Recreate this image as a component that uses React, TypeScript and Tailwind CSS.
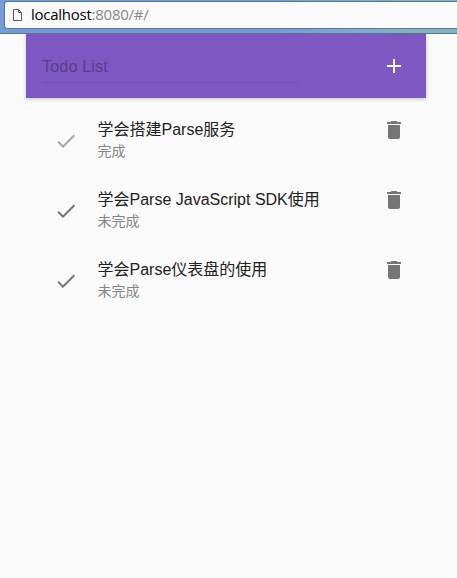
import React from 'react';

type Todo = { title: string; done: boolean };

const todos: Todo[] = [
  { title: '学会搭建Parse服务', done: true },
  { title: '学会Parse JavaScript SDK使用', done: false },
  { title: '学会Parse仪表盘的使用', done: false },
];

function Icon({ d, className }: { d: string; className: string }) {
  return (
    <svg viewBox="0 0 24 24" className={`block h-6 w-6 shrink-0 fill-current ${className}`}>
      <path d={d} />
    </svg>
  );
}

const CHECK = 'M9 16.17L4.83 12l-1.42 1.41L9 19 21 7l-1.41-1.41z';
const TRASH = 'M6 19c0 1.1.9 2 2 2h8c1.1 0 2-.9 2-2V7H6v12zM19 4h-3.5l-1-1h-5l-1 1H5v2h14V4z';
const PLUS = 'M19 13h-6v6h-2v-6H5v-2h6V5h2v6h6v2z';

function AddressBar() {
  return (
    <div className="relative z-10 h-[34px] border-b border-[#54758f] bg-linear-to-r from-[#759cd9] from-60% to-[#86b2bd] to-90% pt-px pl-1">
      <div className="flex h-[28px] items-center rounded-l-[3px] border border-r-0 border-[#56779f] bg-[#fafafa] pl-[8px]">
        <svg viewBox="0 0 9 12" className="h-3 w-[9px] fill-none stroke-[#5a5a5a]">
          <path d="M1 .5h4.5l3 3v8h-8V.5zM5.500 .5v3h3" />
        </svg>
        <span className="mb-0.5 ml-[9px] whitespace-pre font-['Open_Sans','Noto_Sans',sans-serif] text-[15px] leading-5 tracking-[-0.25px] text-[#888]">
          <span className="text-black">localhost</span>:8080/#/
        </span>
      </div>
    </div>
  );
}

function TodoRow({ title, done }: Todo) {
  return (
    <li className="flex h-[70px] pr-5 pl-7">
      <Icon d={CHECK} className={`mt-[23px] ${done ? 'text-[#a5a5a5]' : 'text-[#757575]'}`} />
      <div className="ml-[19.5px] flex-1 pt-3">
        <div className="h-[23px] whitespace-nowrap text-base leading-6 text-[#212121]">{title}</div>
        <div className="h-5 text-sm leading-5 text-[#858585]">{done ? '完成' : '未完成'}</div>
      </div>
      <Icon d={TRASH} className="mt-3 text-[#757575]" />
    </li>
  );
}

export default function App() {
  return (
    <div className="h-[578px] w-[457px] overflow-hidden bg-[#fafafa] font-['Liberation_Sans','Noto_Sans_CJK_SC',sans-serif]">
      <AddressBar />
      <main className="ml-[26px] w-[400px]">
        <header className="flex h-16 justify-between bg-[#7e57c2] pr-5 pl-4 shadow-[0_1px_4px_rgba(0,0,0,0.22)]">
          <div className="h-[49px] w-64 border-b border-[#704eac] pt-[21px] text-base leading-6 tracking-[0.2px] text-[#583d88]">
            Todo List
          </div>
          <Icon d={PLUS} className="mt-5 text-white" />
        </header>
        <ul className="pt-2">
          {todos.map((todo) => (
            <TodoRow key={todo.title} {...todo} />
          ))}
        </ul>
      </main>
    </div>
  );
}
